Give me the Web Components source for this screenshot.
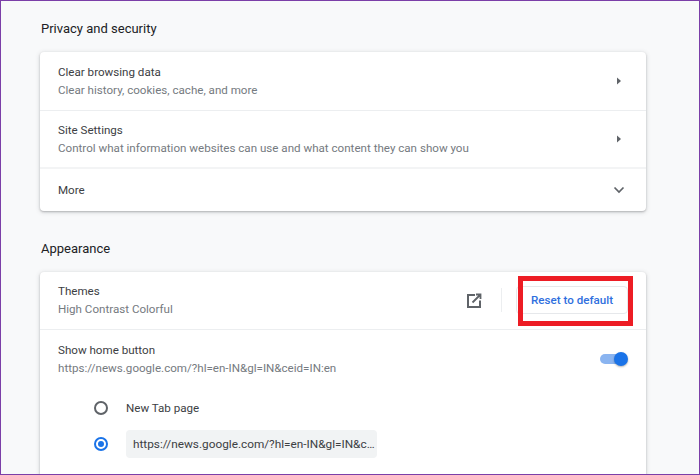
<!DOCTYPE html>
<html>
<head>
<meta charset="utf-8">
<style>
  html, body { margin: 0; padding: 0; background: #f8f9fa; }
</style>
</head>
<body>
<settings-page>
  <settings-section title="Privacy and security">
    <settings-row label="Clear browsing data" sub="Clear history, cookies, cache, and more" icon="arrow" style="height:59px"></settings-row>
    <settings-row label="Site Settings" sub="Control what information websites can use and what content they can show you" icon="arrow" thick></settings-row>
    <settings-row label="More" icon="chevron" short></settings-row>
  </settings-section>
  <settings-section title="Appearance">
    <settings-row label="Themes" sub="High Contrast Colorful" icon="external" lift>
      <reset-button slot="action">Reset to default</reset-button>
    </settings-row>
    <settings-row label="Show home button" sub="https://news.google.com/?hl=en-IN&amp;gl=IN&amp;ceid=IN:en" icon="toggle" plain></settings-row>
    <home-options></home-options>
  </settings-section>
</settings-page>

<script>
const FONT = 'Roboto, "Liberation Sans", Arial, sans-serif';

class SettingsPage extends HTMLElement {
  constructor() {
    super();
    this.attachShadow({ mode: 'open' });
    this.shadowRoot.innerHTML = `
      <style>
        :host {
          display: block;
          box-sizing: border-box;
          position: relative;
          width: 700px;
          height: 475px;
          overflow: hidden;
          background: #f8f9fa;
          border: 1px solid #7b3fa8;
          padding: 18px 53px 0 39px;
          font-family: ${FONT};
        }
        .mark {
          position: absolute;
          left: 517px;
          top: 275px;
          width: 115px;
          height: 50px;
          box-sizing: border-box;
          border: 5px solid #ed1c24;
        }
      </style>
      <slot></slot>
      <div class="mark"></div>
    `;
  }
}

class SettingsSection extends HTMLElement {
  constructor() {
    super();
    this.attachShadow({ mode: 'open' });
    this.shadowRoot.innerHTML = `
      <style>
        :host { display: block; margin-bottom: 28px; }
        h2 {
          margin: 0 0 13px 1px;
          height: 20px;
          line-height: 20px;
          font-size: 13px;
          font-weight: 400;
          color: #202124;
        }
        .card {
          background: #fff;
          border-radius: 4px;
          box-shadow: 0 1px 2px rgba(60,64,67,.3), 0 1px 4px 1px rgba(60,64,67,.13);
        }
      </style>
      <h2></h2>
      <div class="card"><slot></slot></div>
    `;
    this.shadowRoot.querySelector('h2').textContent = this.getAttribute('title');
  }
}

const ICONS = {
  arrow: `<svg width="24" height="24" viewBox="0 0 24 24"><path d="M10 8.500l4 3.500-4 3.500z" fill="#5f6368"/></svg>`,
  chevron: `<svg width="24" height="24" viewBox="0 0 24 24"><path d="M7.500 9.500l4.500 4.500 4.500-4.500" fill="none" stroke="#5f6368" stroke-width="1.700"/></svg>`,
  external: `<svg width="24" height="24" viewBox="0 0 24 24"><path d="M13 6H6v12h12v-6.500" fill="none" stroke="#5f6368" stroke-width="2"/><path d="M14 5.500h4.500V10M18 6l-7.500 7.500" fill="none" stroke="#5f6368" stroke-width="1.800"/></svg>`
};

class SettingsRow extends HTMLElement {
  constructor() {
    super();
    this.attachShadow({ mode: 'open' });
    const icon = this.getAttribute('icon');
    const sub = this.getAttribute('sub');
    const toggle = `<div class="toggle"><div class="track"></div><div class="knob"></div></div>`;
    this.shadowRoot.innerHTML = `
      <style>
        :host {
          display: flex;
          align-items: center;
          box-sizing: border-box;
          height: 58px;
          padding: 0 15px 0 18px;
          border-bottom: 1px solid #eceef0;
        }
        :host([short]) { height: 42px; border-bottom: none; }
        :host([plain]) { border-bottom: none; }
        :host([thick]) { border-bottom: 2px solid #f3f4f5; }
        :host([lift]) .text { margin-bottom: 2px; }
        .text { flex: 1; min-width: 0; }
        .label { font-size: 11.6px; line-height: 18px; color: #3c4043; }
        .sub { font-size: 11.6px; line-height: 18px; color: #757a80; }
        .icon { display: flex; width: 24px; height: 24px; }
        .icon.external { margin-right: 15px; }
        .toggle { position: relative; width: 28px; height: 14px; margin-right: 3px; }
        .track { position: absolute; left: 0; top: 2px; width: 24px; height: 10px; border-radius: 5px; background: #8ab4f0; }
        .knob { position: absolute; right: 0; top: 0; width: 14px; height: 14px; border-radius: 50%; background: #1a73e8; box-shadow: 0 1px 2px rgba(0,0,0,.3); }
        ::slotted([slot="action"]) { margin-left: 15px; margin-right: 3px; margin-bottom: 2px; }
      </style>
      <div class="text">
        <div class="label"></div>
        ${sub ? '<div class="sub"></div>' : ''}
      </div>
      ${icon === 'toggle' ? toggle : `<div class="icon ${icon}">${ICONS[icon]}</div>`}
      <slot name="action"></slot>
    `;
    this.shadowRoot.querySelector('.label').textContent = this.getAttribute('label');
    if (sub) this.shadowRoot.querySelector('.sub').textContent = sub;
  }
}

class ResetButton extends HTMLElement {
  constructor() {
    super();
    this.attachShadow({ mode: 'open' });
    this.shadowRoot.innerHTML = `
      <style>
        :host {
          display: flex;
          align-items: center;
          box-sizing: border-box;
          height: 28px;
          padding: 0 14px;
          border: 1px solid #e6e8eb;
          border-radius: 4px;
          font-size: 11.6px;
          font-weight: 500;
          color: #2f6fde;
          white-space: nowrap;
          position: relative;
        }
        :host::before {
          content: "";
          position: absolute;
          left: -16px;
          top: 1px;
          bottom: 1px;
          border-left: 1px solid #eceef0;
        }
      </style>
      <slot></slot>
    `;
  }
}

class HomeOptions extends HTMLElement {
  constructor() {
    super();
    this.attachShadow({ mode: 'open' });
    this.shadowRoot.innerHTML = `
      <style>
        :host { display: block; height: 105px; padding: 6px 0 0 54px; font-size: 11.6px; color: #3c4043; }
        .opt { display: flex; align-items: center; gap: 18px; }
        .opt.first { height: 28px; }
        .opt.second { height: 28px; margin-top: 8px; }
        .radio { box-sizing: border-box; width: 14px; height: 14px; border-radius: 50%; border: 2px solid #5f6368; flex: none; }
        .radio.on { border-color: #1a73e8; position: relative; }
        .radio.on::after { content: ""; position: absolute; inset: 2px; border-radius: 50%; background: #1a73e8; }
        .input {
          box-sizing: border-box;
          width: 251px;
          height: 28px;
          line-height: 28px;
          padding: 0 7px;
          background: #f1f3f4;
          border-radius: 4px;
          white-space: nowrap;
          font-size: 11.8px;
          color: #3c4043;
        }
      </style>
      <div class="opt first"><div class="radio"></div><span>New Tab page</span></div>
      <div class="opt second"><div class="radio on"></div><div class="input">https://news.google.com/?hl=en-IN&amp;gl=IN&amp;c…</div></div>
    `;
  }
}

customElements.define('settings-page', SettingsPage);
customElements.define('settings-section', SettingsSection);
customElements.define('settings-row', SettingsRow);
customElements.define('reset-button', ResetButton);
customElements.define('home-options', HomeOptions);
</script>
</body>
</html>
